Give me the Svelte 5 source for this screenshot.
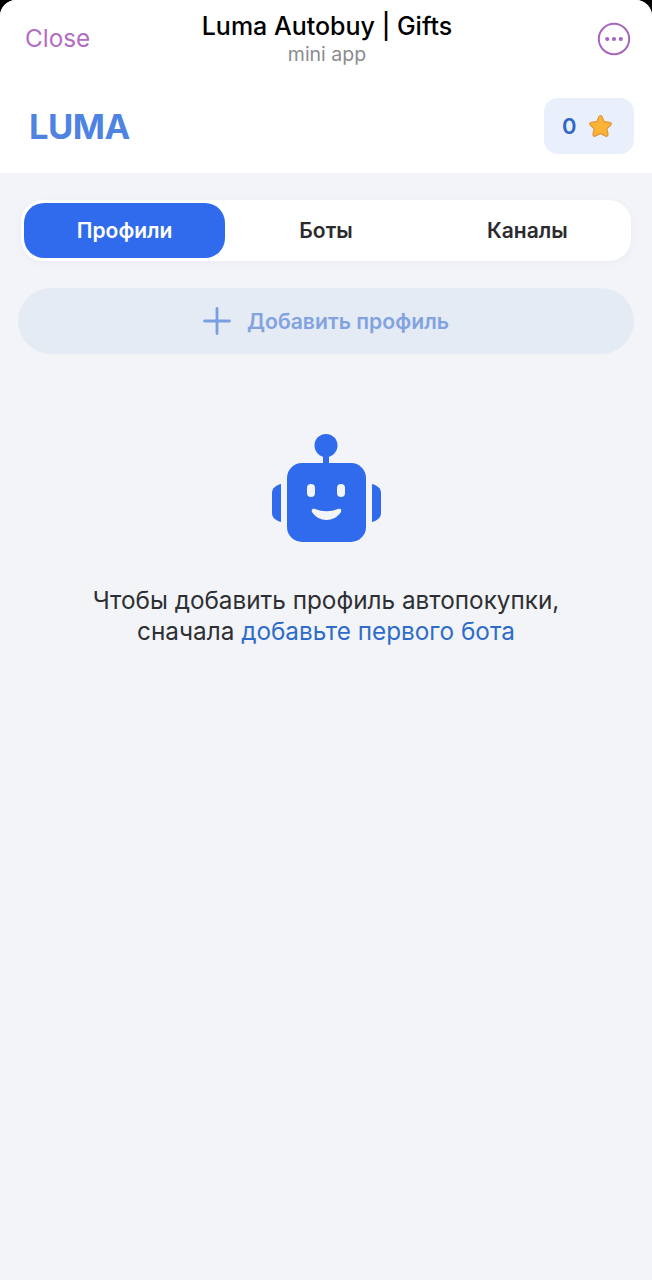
<script>
  const tabs = ['Профили', 'Боты', 'Каналы'];
</script>

<div class="screen">
  <header class="sheet">
    <div class="appbar">
      <span class="close">Close</span>
      <div class="titles">
        <div class="title">Luma Autobuy | Gifts</div>
        <div class="sub">mini app</div>
      </div>
      <svg class="more" width="34" height="34" viewBox="0 0 34 34" fill="none">
        <circle cx="17" cy="17" r="15.2" stroke="#a866bb" stroke-width="2"/>
        <circle cx="10.2" cy="17" r="2.1" fill="#a866bb"/>
        <circle cx="17" cy="17" r="2.1" fill="#a866bb"/>
        <circle cx="23.8" cy="17" r="2.1" fill="#a866bb"/>
      </svg>
    </div>
    <div class="brandbar">
      <div class="logo">LUMA</div>
      <div class="balance">
        <span class="num">0</span>
        <svg width="25" height="25" viewBox="0 0 25 25">
          <path d="M12.5 1.500c.8 0 1.300.6 1.700 1.400l2 4.700 5.300.6c1.800.2 2.400 1.800 1.200 3l-3.800 3.500 1.100 5.400c.3 1.700-1.200 2.800-2.700 2l-4.800-2.700-4.800 2.700c-1.500.8-3-.3-2.700-2l1.100-5.400-3.800-3.500c-1.200-1.200-.6-2.800 1.200-3l5.300-.6 2-4.700c.4-.8.9-1.400 1.700-1.400z" fill="#fbb433" stroke="#e08f35" stroke-width="1.100" stroke-linejoin="round"/>
        </svg>
      </div>
    </div>
  </header>

  <main class="content">
    <nav class="tabs">
      {#each tabs as tab, i}
        <div class="tab" class:active={i === 0}>{tab}</div>
      {/each}
    </nav>

    <div class="add">
      <svg width="28" height="28" viewBox="0 0 28 28" fill="none">
        <path d="M14 1.500v25M1.500 14h25" stroke="#7a9fe0" stroke-width="2.800" stroke-linecap="round"/>
      </svg>
      <span>Добавить профиль</span>
    </div>

    <div class="empty">
      <svg class="robot" width="112" height="110" viewBox="0 0 112 110" fill="#2f6bec">
        <circle cx="56" cy="11.500" r="11.500"/>
        <rect x="53" y="18" width="6" height="14"/>
        <rect x="17" y="29" width="79" height="79" rx="15"/>
        <path d="M11 50v38c-5-1.500-9-4-9-9V59c0-5 4-7.500 9-9z"/>
        <path d="M102 50v38c5-1.500 9-4 9-9V59c0-5-4-7.500-9-9z"/>
        <rect x="37" y="50" width="8" height="13" rx="4" fill="#f2f4f8"/>
        <rect x="67" y="50" width="8" height="13" rx="4" fill="#f2f4f8"/>
        <path d="M45 75Q56.500 79.500 68 75c2.500-1 4 .5 3 3C68 83 62 86 56.500 86S45 83 42 78c-1-2.500.5-4 3-3z" fill="#f2f4f8"/>
      </svg>
      <p>Чтобы добавить профиль автопокупки,<br />сначала <span class="link">добавьте первого бота</span></p>
    </div>
  </main>
</div>

<style>
  :global(body) {
    margin: 0;
    background: #000;
  }
  .screen {
    width: 652px;
    height: 1280px;
    background: #f2f4f8;
    border-radius: 16px 16px 0 0;
    overflow: hidden;
    font-family: Inter, "Noto Sans", sans-serif;
  }
  .sheet {
    height: 173px;
    background: #fff;
  }
  .appbar {
    display: grid;
    grid-template-columns: 1fr auto 1fr;
    align-items: start;
    padding: 0 21px 0 23px;
    height: 85px;
  }
  .close {
    margin-top: 23px;
    margin-left: 2px;
    font-size: 24.300px;
    line-height: 30px;
    color: #b36cc3;
  }
  .titles {
    margin-top: 11px;
    text-align: center;
  }
  .title {
    font-size: 25px;
    line-height: 30px;
    font-weight: 500;
    color: #000;
  }
  .sub {
    font-size: 19.500px;
    line-height: 26px;
    color: #8b8b8f;
  }
  .more {
    margin-top: 22px;
    justify-self: end;
  }
  .brandbar {
    display: flex;
    align-items: center;
    justify-content: space-between;
    padding: 13px 18px 0 29px;
  }
  .logo {
    font-size: 34.600px;
    line-height: 56px;
    font-weight: 700;
    letter-spacing: -0.5px;
    color: #4f83e2;
  }
  .balance {
    box-sizing: border-box;
    width: 90px;
    height: 56px;
    padding: 0 21px 0 18px;
    border-radius: 14px;
    background: #e9f0fc;
    display: flex;
    align-items: center;
    justify-content: space-between;
  }
  .num {
    font-size: 22px;
    font-weight: 600;
    color: #3166c4;
  }
  .content {
    padding: 27px 18px 0;
  }
  .tabs {
    margin: 0 3px;
    height: 61px;
    box-sizing: border-box;
    padding: 3px;
    background: #fff;
    border-radius: 22px;
    box-shadow: 0 2px 8px rgba(40, 60, 100, 0.04);
    display: grid;
    grid-template-columns: repeat(3, 1fr);
  }
  .tab {
    display: flex;
    align-items: center;
    justify-content: center;
    font-size: 21px;
    font-weight: 600;
    color: #2b2b2f;
    border-radius: 20px;
  }
  .tab.active {
    background: #2f6bec;
    color: #fff;
  }
  .add {
    margin-top: 27px;
    height: 66px;
    border-radius: 33px;
    background: #e5ebf5;
    display: flex;
    align-items: center;
    justify-content: center;
    gap: 16px;
    font-size: 21.200px;
    font-weight: 600;
    color: #82a3df;
  }
  .empty {
    margin-top: 80px;
    display: flex;
    flex-direction: column;
    align-items: center;
  }
  .robot {
    display: block;
  }
  p {
    margin: 41px 0 0;
    text-align: center;
    font-size: 24.300px;
    line-height: 31px;
    color: #2e2f33;
  }
  .link {
    color: #2f6cc9;
  }
</style>
